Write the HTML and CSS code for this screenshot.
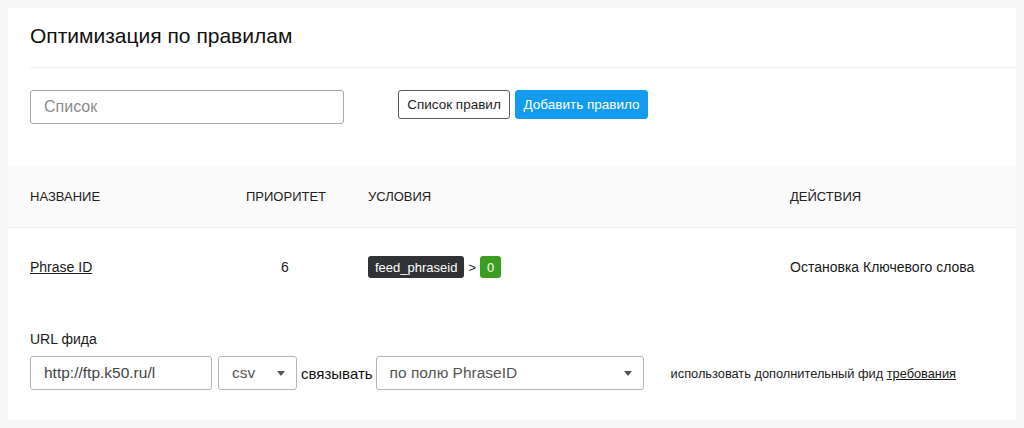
FILE: index.html
```html
<!DOCTYPE html>
<html lang="ru">
<head>
<meta charset="utf-8">
<link rel="stylesheet" href="styles.css">
</head>
<body>
<div class="page">
  <section class="card top">
    <h1 class="title">Оптимизация по правилам</h1>
    <div class="divider"></div>
    <div class="toolbar">
      <input class="search" type="text" placeholder="Список">
      <div class="buttons">
        <button class="btn btn-outline">Список правил</button>
        <button class="btn btn-primary">Добавить правило</button>
      </div>
    </div>
  </section>
  <section class="table">
    <div class="thead grid">
      <div>НАЗВАНИЕ</div>
      <div>ПРИОРИТЕТ</div>
      <div>УСЛОВИЯ</div>
      <div>ДЕЙСТВИЯ</div>
    </div>
    <div class="tbody">
      <div class="row grid">
        <div><a class="link name" href="#">Phrase ID</a></div>
        <div class="prio">6</div>
        <div class="cond"><span class="badge dark">feed_phraseid</span><span class="op">&gt;</span><span class="badge green">0</span></div>
        <div>Остановка Ключевого слова</div>
      </div>
      <div class="feed">
        <div class="feed-label">URL фида</div>
        <div class="feed-row">
          <input class="field url" type="text" value="http://ftp.k50.ru/links.csv">
          <div class="field select csv"><span>csv</span><span class="caret"></span></div>
          <span class="bind">связывать</span>
          <div class="field select by"><span>по полю PhraseID</span><span class="caret"></span></div>
          <span class="extra">использовать дополнительный фид <a class="link" href="#">требования</a></span>
        </div>
      </div>
    </div>
  </section>
</div>
</body>
</html>
```
FILE: styles.css
```css
* { box-sizing: border-box; }
html, body { margin: 0; background: #f6f6f6; }
body {
  padding: 8px;
  font-family: "Liberation Sans", Arial, sans-serif;
  color: #1a1a1a;
}
.page { display: flex; flex-direction: column; width: 1008px; }
.card { background: #fff; }
.top { padding: 16px 0 0 22px; height: 158px; }
.title {
  margin: 0;
  font-weight: normal;
  font-size: 21px;
  line-height: 24px;
  color: #111;
}
.divider { height: 1px; background: #efefef; margin-top: 19px; }
.toolbar { display: flex; align-items: flex-start; margin-top: 22px; }
.search {
  width: 314px; height: 34px;
  border: 1px solid #a8a8a8; border-radius: 3px;
  padding: 0 13px;
  font: 16px "Liberation Sans", Arial, sans-serif;
  color: #333;
  outline: none;
}
.search::placeholder { color: #8a8a8a; }
.buttons { display: flex; gap: 5px; margin-left: 54px; }
.btn {
  height: 29px;
  border-radius: 3px;
  font: 13.5px "Liberation Sans", Arial, sans-serif;
  padding: 0 8px;
  white-space: nowrap;
  cursor: pointer;
}
.btn-outline { background: #fff; border: 1px solid #5a5a5a; color: #222; width: 112px; }
.btn-primary { background: #139cef; border: 1px solid #139cef; color: #fff; width: 133px; padding: 0 6px; }

.table { display: flex; flex-direction: column; }
.grid {
  display: grid;
  grid-template-columns: 216px 122px 422px 1fr;
  padding-left: 22px;
  align-items: center;
}
.thead {
  height: 62px;
  background: #fafafa;
  font-size: 13px;
  color: #222;
  border-bottom: 1px solid #f0f0f0;
}
.tbody { background: #fff; height: 192px; }
.row { height: 78px; font-size: 14px; color: #1a1a1a; }
.link { color: #1a1a1a; text-decoration: underline; }
.prio { padding-left: 35px; }
.cond { display: flex; align-items: center; }
.badge {
  display: inline-flex; align-items: center;
  height: 22px; padding: 0 7px;
  border-radius: 3px;
  font-size: 13px; color: #fff;
}
.dark { background: #303236; }
.green { background: #3c9e21; padding: 0 7px; }
.op { margin: 0 4px; font-size: 13px; }

.feed { padding: 25px 0 0 22px; }
.feed-label { font-size: 14px; line-height: 16px; color: #1a1a1a; }
.feed-row { display: flex; align-items: center; margin-top: 9px; }
.field {
  height: 34px;
  border: 1px solid #b5b5b5; border-radius: 3px;
  background: #fff;
  font: 15.5px "Liberation Sans", Arial, sans-serif;
  color: #555;
}
.url { width: 182px; padding: 0 56px 0 13px; outline: none; color: #444; }
.select { display: flex; align-items: center; justify-content: space-between; padding: 0 11px 0 13px; }
.csv { width: 79px; margin-left: 6px; }
.by { width: 268px; }
.caret {
  width: 0; height: 0;
  border-left: 4px solid transparent;
  border-right: 4px solid transparent;
  border-top: 5px solid #555;
}
.bind { font-size: 15px; color: #111; margin: 0 3px 0 4px; }
.extra { font-size: 12.8px; color: #222; margin-left: 27px; }
```
